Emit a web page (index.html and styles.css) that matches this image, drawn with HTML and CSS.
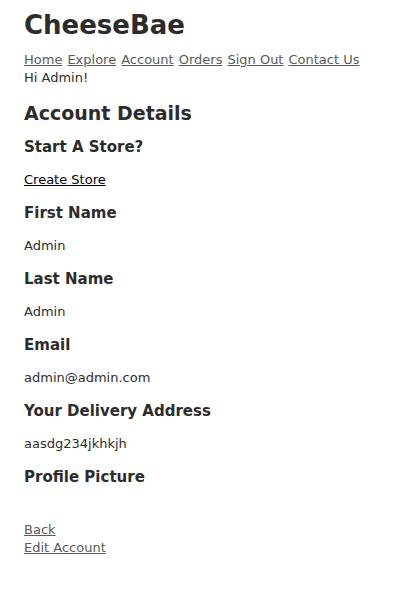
FILE: index.html
```html
<!DOCTYPE html>
<html lang="en">
<head>
<meta charset="utf-8">
<meta name="viewport" content="width=device-width, initial-scale=1">
<title>CheeseBae</title>
<link rel="stylesheet" href="styles.css">
</head>
<body>
<header>
<h1>CheeseBae</h1>
<nav class="nav">
<a href="#">Home</a>
<a href="#">Explore</a>
<a href="#">Account</a>
<a href="#">Orders</a>
<a href="#">Sign Out</a>
<a href="#">Contact Us</a>
</nav>
<div>Hi Admin!</div>
</header>
<main>
<h2>Account Details</h2>
<h3>Start A Store?</h3>
<p><a class="create" href="#">Create Store</a></p>
<h3>First Name</h3>
<p>Admin</p>
<h3>Last Name</h3>
<p>Admin</p>
<h3>Email</h3>
<p>admin@admin.com</p>
<h3>Your Delivery Address</h3>
<p>aasdg234jkhkjh</p>
<h3>Profile Picture</h3>
</main>
<footer class="actions">
<a href="#">Back</a>
<a href="#">Edit Account</a>
</footer>
</body>
</html>
```
FILE: styles.css
```css
body {
  margin: 8px 24px;
  background: #fff;
  color: #2c2c2c;
  font-family: Verdana, "DejaVu Sans", sans-serif;
  font-size: 13px;
  line-height: 18px;
}

h1 {
  margin: 0 0 9px;
  font-size: 26px;
  line-height: 34px;
}

h2 {
  margin: 15px 0 13px;
  font-size: 19px;
  line-height: 22px;
}

h3 {
  margin: 0 0 14px;
  font-size: 15px;
  line-height: 20px;
}

p {
  margin: 0 0 14px;
}

a {
  color: #5a5a5a;
}

.nav {
  display: flex;
  flex-wrap: wrap;
  column-gap: 5px;
}

.create {
  color: #000;
}

.actions {
  display: flex;
  flex-direction: column;
  align-items: flex-start;
  margin-top: 34px;
}
```
